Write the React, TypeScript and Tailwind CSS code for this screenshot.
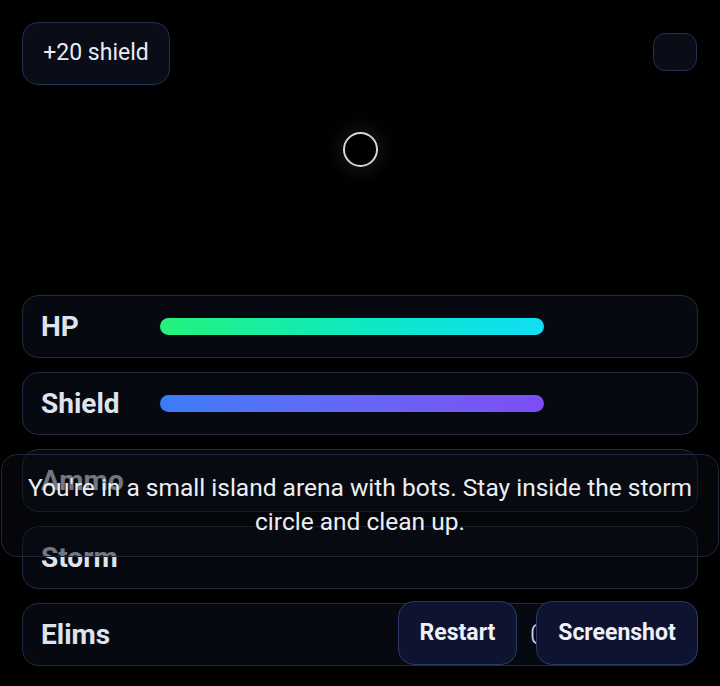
import React from "react";

function Row({ label, children }: { label: string; children?: React.ReactNode }) {
  return (
    <div className="h-[63px] rounded-[16px] border border-[#232a40] bg-[#070911] flex items-center pl-[18px]">
      <div className="w-[119px] text-[28px] font-bold text-[#dfe3ee] leading-none">{label}</div>
      {children}
    </div>
  );
}

export default function App() {
  return (
    <div
      className="relative w-[720px] h-[686px] bg-black overflow-hidden"
      style={{ fontFamily: "Roboto, 'Noto Sans', sans-serif" }}
    >
      <div className="flex justify-between items-start pl-[22px] pr-[23px] pt-[22px]">
        <button className="w-[148px] h-[63px] rounded-[16px] border border-[#283050] bg-[#0a0c18] text-[23px] text-[#e8eaf2]">
          +20 shield
        </button>
        <div className="mt-[11px] w-[44px] h-[38px] rounded-[12px] border border-[#283050] bg-[#0a0c18]" />
      </div>

      <div className="flex justify-center mt-[47px]">
        <div className="w-[35px] h-[35px] rounded-full border-2 border-[#d6d6d6] shadow-[0_0_22px_rgba(255,255,255,0.14)]" />
      </div>

      <div className="flex flex-col gap-[14px] px-[22px] mt-[128px]">
        <Row label="HP">
          <div className="w-[384px] h-[17px] rounded-full bg-gradient-to-r from-[#25f27a] to-[#12def5]" />
        </Row>
        <Row label="Shield">
          <div className="w-[384px] h-[17px] rounded-full bg-gradient-to-r from-[#3b7cf8] to-[#7d4df5]" />
        </Row>
        <Row label="Ammo" />
        <Row label="Storm" />
        <Row label="Elims">
          <div className="ml-[370px] text-[28px] font-light text-[#d4d8e4] leading-none">0</div>
        </Row>
      </div>

      <div className="absolute left-[1px] right-[1px] top-[454px] h-[103px] rounded-[16px] border border-[#1f2538] bg-[rgba(9,11,20,0.5)] px-[18px] pt-[16px] text-center text-[24.5px] leading-[34px] text-[#eceef4]">
        You're in a small island arena with bots. Stay inside the storm circle and clean up.
      </div>

      <div className="absolute right-[22px] top-[601px] flex gap-[19px]">
        <button className="w-[119px] h-[64px] rounded-[16px] border border-[#2c3868] bg-[#0e1330] text-[23px] font-bold text-[#eef0fa]">
          Restart
        </button>
        <button className="w-[162px] h-[64px] rounded-[16px] border border-[#2c3868] bg-[#0e1330] text-[23px] font-bold text-[#eef0fa]">
          Screenshot
        </button>
      </div>
    </div>
  );
}
